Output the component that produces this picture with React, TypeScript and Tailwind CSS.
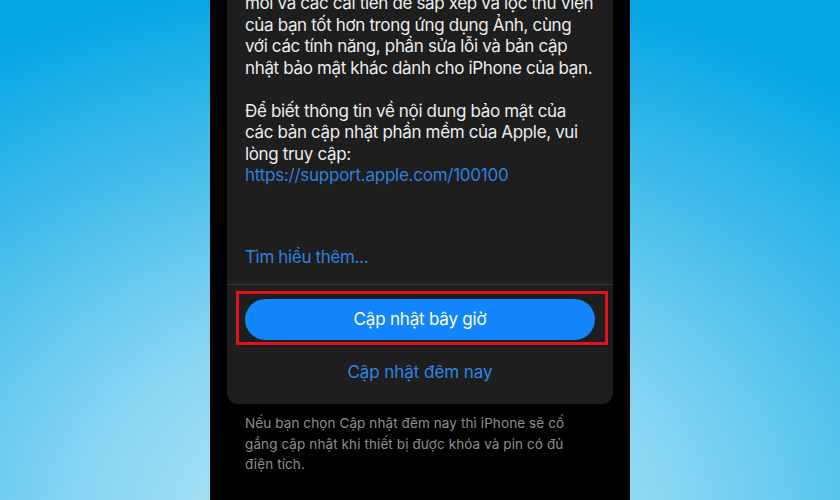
export default function App() {
  return (
    <div
      className="h-[500px] w-[840px] overflow-hidden flex justify-center bg-[radial-gradient(ellipse_90%_110%_at_45%_105%,#c6ecfa_0%,#86d5f2_40%,#3bb9ea_75%,#05a6e4_100%)]"
      style={{ fontFamily: "Inter, 'Noto Sans', sans-serif" }}
    >
      <div className="w-[420px] h-full bg-black px-[17px] overflow-hidden">
        {/* update card */}
        <div className="-mt-[20px] rounded-[11px] bg-[#1e1e1f]">
          <div className="px-[18px] pt-[13px] pb-[16px] text-[17px] leading-[21.5px] tracking-[-0.35px] text-[#ececec] whitespace-nowrap">
            <p>
              mới và các cải tiến để sắp xếp và lọc thư viện
              <br />
              của bạn tốt hơn trong ứng dụng Ảnh, cùng
              <br />
              với các tính năng, phần sửa lỗi và bản cập
              <br />
              nhật bảo mật khác dành cho iPhone của bạn.
            </p>
            <p className="mt-[21.5px]">
              Để biết thông tin về nội dung bảo mật của
              <br />
              các bản cập nhật phần mềm của Apple, vui
              <br />
              lòng truy cập:
            </p>
            <p className="text-[#2f80dc] tracking-[-0.25px]">https://support.apple.com/100100</p>
            <p className="mt-[60px] text-[#2f80dc]">Tìm hiểu thêm...</p>
          </div>

          <div className="border-t border-[#343436] px-[18px] pt-[14px] pb-[21px]">
            <div className="relative">
              <button className="w-full h-[41px] rounded-full bg-[#1284fc] text-white text-[17px] tracking-[-0.2px]">
                Cập nhật bây giờ
              </button>
              <div className="absolute -left-[9px] -right-[13px] -top-[8px] -bottom-[5px] border-[3px] border-[#e3121a] pointer-events-none" />
            </div>
            <p className="mt-[21px] text-center text-[17px] leading-[22px] tracking-[-0.05px] text-[#2f86e6]">
              Cập nhật đêm nay
            </p>
          </div>
        </div>

        {/* footnote */}
        <p className="mt-[9px] px-[18px] text-[13.5px] leading-[20.5px] tracking-[0.1px] text-[#8d8d92] whitespace-nowrap">
          Nếu bạn chọn Cập nhật đêm nay thì iPhone sẽ cố
          <br />
          gắng cập nhật khi thiết bị được khóa và pin có đủ
          <br />
          điện tích.
        </p>
      </div>
    </div>
  );
}
